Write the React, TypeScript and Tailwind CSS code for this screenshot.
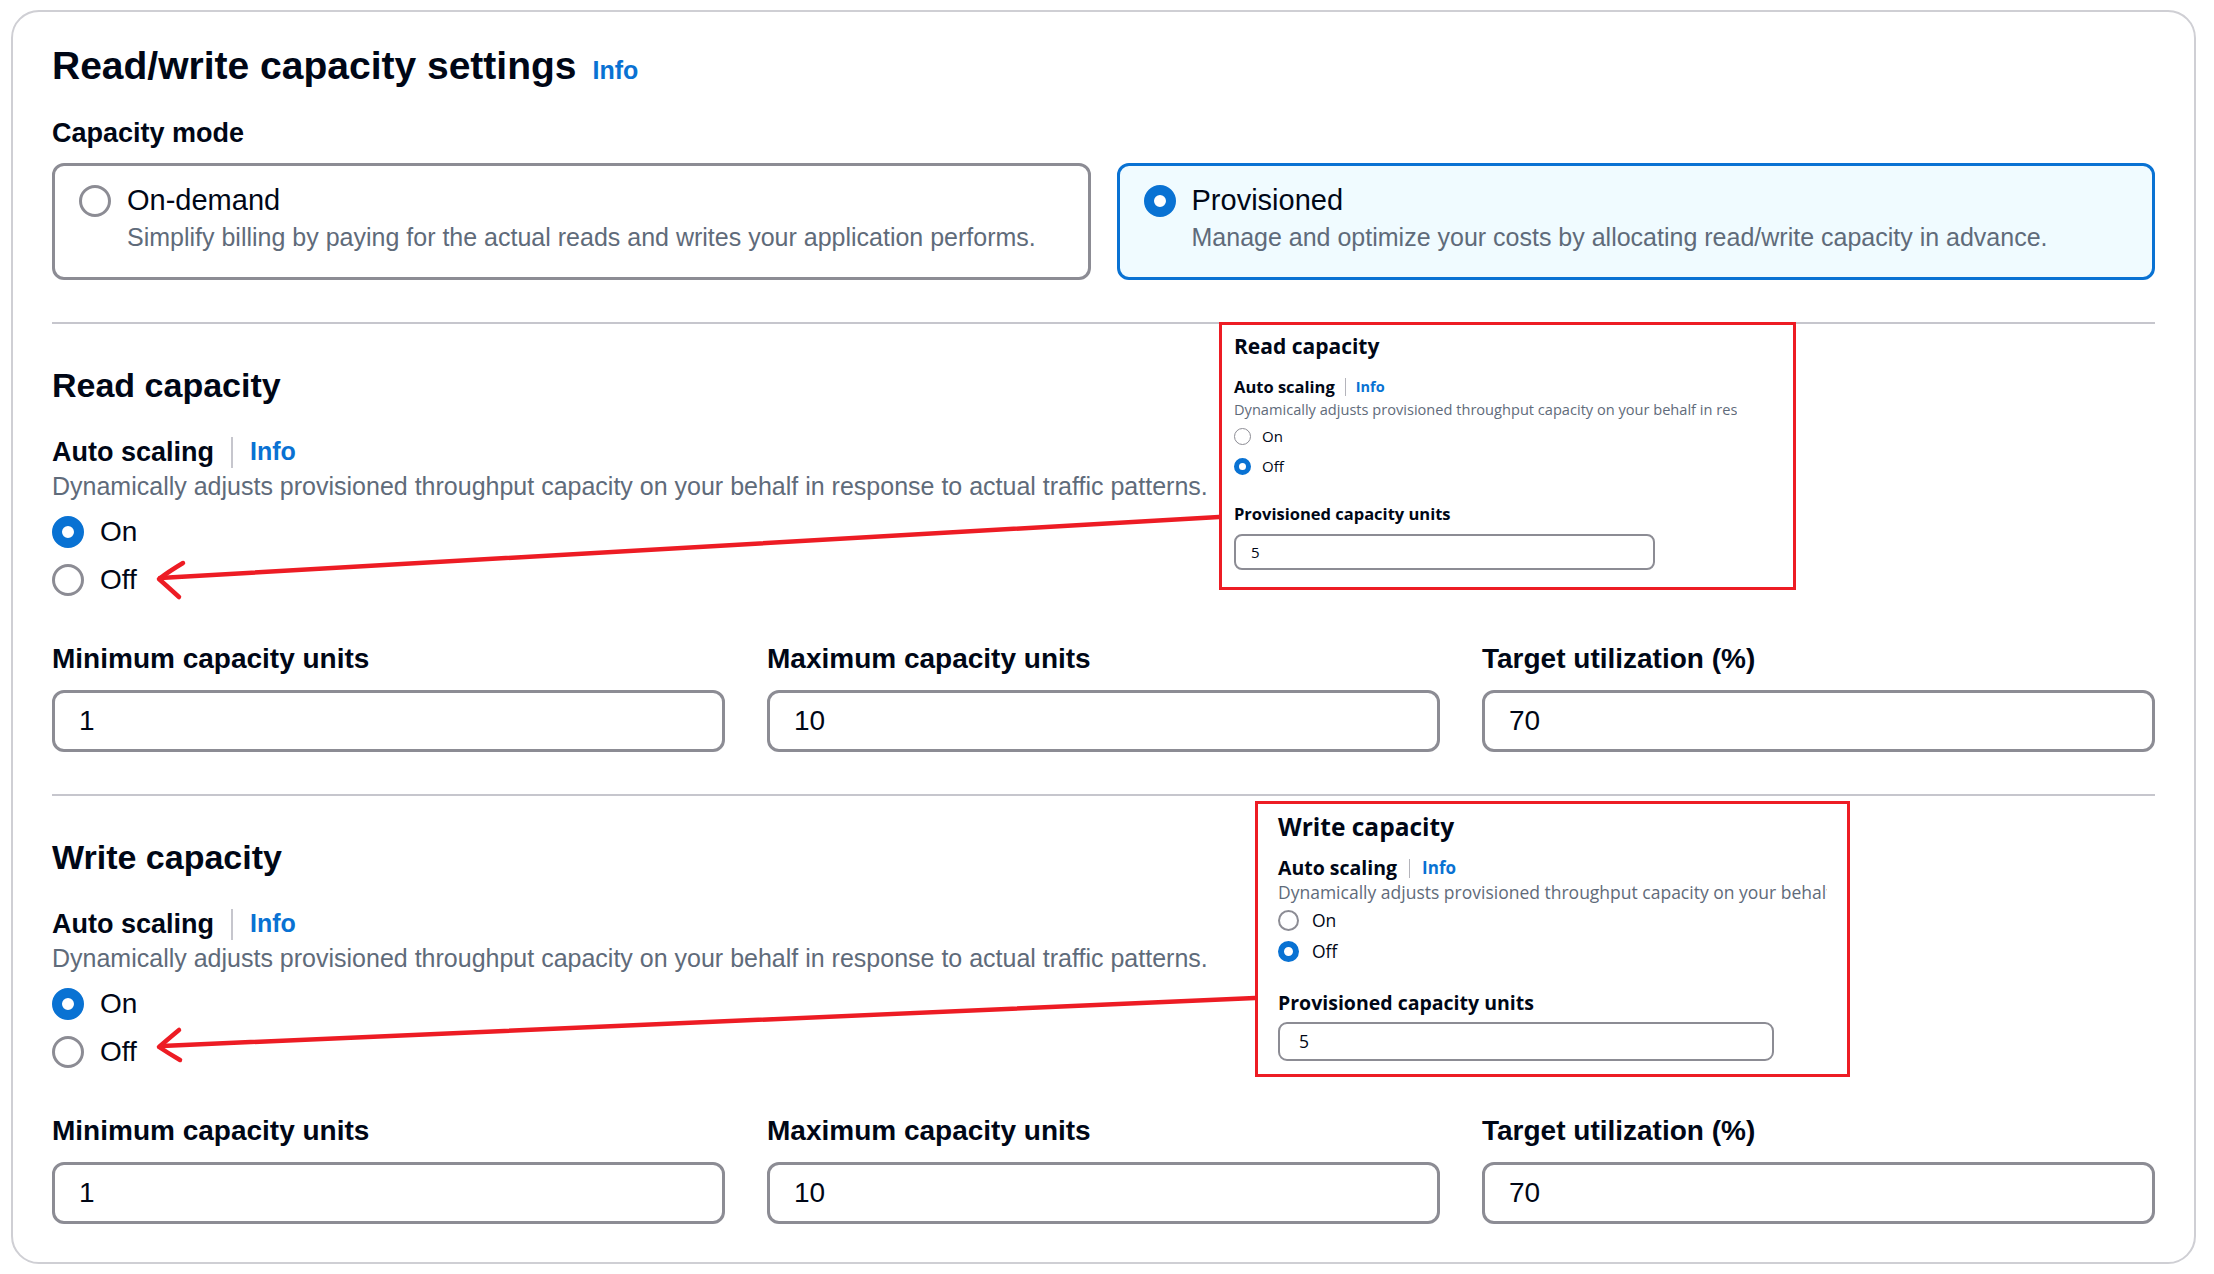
import React from 'react';

const MAIN = "font-['Liberation_Sans',Arial,sans-serif]";
const SHOT = "font-['Open_Sans','Noto_Sans',sans-serif]";

const DESC = 'Dynamically adjusts provisioned throughput capacity on your behalf in response to actual traffic patterns.';

const MainRadio: React.FC<{ checked?: boolean }> = ({ checked }) => (
  <span
    className={`block w-[32px] h-[32px] shrink-0 rounded-full bg-white ${
      checked ? 'border-[10px] border-[#0972d3]' : 'border-[3px] border-[#8c8c94]'
    }`}
  />
);

const ModeTile: React.FC<{ title: string; desc: string; selected?: boolean }> = ({ title, desc, selected }) => (
  <div
    className={`h-[117px] rounded-[12px] border-[3px] pl-[24px] pt-[16px] ${
      selected ? 'border-[#0972d3] bg-[#f0fbff]' : 'border-[#8c8c94] bg-white'
    }`}
  >
    <div className="flex items-center h-[38px] gap-[16px]">
      <MainRadio checked={selected} />
      <span className="text-[29px] text-[#000716]">{title}</span>
    </div>
    <p className="mt-[2px] pl-[48px] text-[25px] leading-[30px] text-[#5f6b7a]">{desc}</p>
  </div>
);

const fields = [
  { label: 'Minimum capacity units', value: '1' },
  { label: 'Maximum capacity units', value: '10' },
  { label: 'Target utilization (%)', value: '70' },
];

const CapacitySection: React.FC<{ title: string }> = ({ title }) => (
  <section>
    <h2 className="mt-[39px] h-[44px] flex items-center text-[34px] font-bold text-[#000716]">{title}</h2>
    <div className="mt-[27px] h-[36px] flex items-center">
      <span className="text-[27px] font-bold text-[#000716]">Auto scaling</span>
      <span className="mx-[17px] w-[2px] h-[31px] bg-[#c6c6cd]" />
      <a className="text-[25px] font-bold text-[#0972d3]">Info</a>
    </div>
    <p className="mt-[1px] h-[32px] flex items-center text-[25px] text-[#5f6b7a]">{DESC}</p>
    <div className="mt-[5px]">
      <div className="h-[48px] flex items-center gap-[16px]">
        <MainRadio checked />
        <span className="text-[28px] text-[#000716]">On</span>
      </div>
      <div className="h-[48px] flex items-center gap-[16px]">
        <MainRadio />
        <span className="text-[28px] text-[#000716]">Off</span>
      </div>
    </div>
    <div className="mt-[37px] grid grid-cols-3 gap-x-[42px]">
      {fields.map((f) => (
        <div key={f.label}>
          <div className="h-[36px] flex items-center text-[28px] font-bold text-[#000716]">{f.label}</div>
          <div className="mt-[13px] h-[62px] rounded-[12px] border-[3px] border-[#8c8c94] bg-white px-[24px] flex items-center text-[28px] text-[#000716]">
            {f.value}
          </div>
        </div>
      ))}
    </div>
  </section>
);

// screenshots pasted over the form, read one is a bit smaller than write one
const ReadShot: React.FC = () => (
  <div className={`absolute left-[1219px] top-[322px] w-[577px] h-[268px] border-[3px] border-[#ed1c24] bg-white pl-[12px] pt-[9px] ${SHOT}`}>
    <div className="h-[26px] flex items-center text-[21px] font-bold text-[#000716]">Read capacity</div>
    <div className="mt-[16px] h-[22px] flex items-center">
      <span className="text-[16.5px] font-bold text-[#000716]">Auto scaling</span>
      <span className="mx-[10px] w-[1px] h-[18px] bg-[#b4b4bb]" />
      <span className="text-[14.5px] font-bold text-[#0972d3]">Info</span>
    </div>
    <div className="mt-[1px] w-[503px] h-[20px] overflow-hidden whitespace-nowrap text-[14.6px] leading-[20px] text-[#5f6b7a]">
      {DESC}
    </div>
    <div className="mt-[2px]">
      <div className="h-[30px] flex items-center gap-[11px]">
        <span className="block w-[17px] h-[17px] rounded-full border-[1.5px] border-[#8c8c94]" />
        <span className="text-[15px] text-[#000716]">On</span>
      </div>
      <div className="h-[30px] flex items-center gap-[11px]">
        <span className="block w-[17px] h-[17px] rounded-full border-[5px] border-[#0972d3]" />
        <span className="text-[15px] text-[#000716]">Off</span>
      </div>
    </div>
    <div className="mt-[22px] h-[22px] flex items-center text-[16.5px] font-bold text-[#000716]">Provisioned capacity units</div>
    <div className="mt-[9px] w-[421px] h-[36px] rounded-[8px] border-2 border-[#8c8c94] pl-[15px] flex items-center text-[15px] text-[#000716]">
      5
    </div>
  </div>
);

const WriteShot: React.FC = () => (
  <div className={`absolute left-[1255px] top-[801px] w-[595px] h-[276px] border-[3px] border-[#ed1c24] bg-white pl-[20px] pt-[8px] ${SHOT}`}>
    <div className="h-[30px] flex items-center text-[24.5px] font-bold text-[#000716]">Write capacity</div>
    <div className="mt-[13px] h-[26px] flex items-center">
      <span className="text-[19.5px] font-bold text-[#000716]">Auto scaling</span>
      <span className="mx-[12px] w-[1px] h-[19px] bg-[#b4b4bb]" />
      <span className="text-[17px] font-bold text-[#0972d3]">Info</span>
    </div>
    <div className="w-[549px] h-[22px] overflow-hidden whitespace-nowrap text-[17.5px] leading-[22px] text-[#5f6b7a]">
      {DESC}
    </div>
    <div className="mt-[2px]">
      <div className="h-[31px] flex items-center gap-[13px]">
        <span className="block w-[21px] h-[21px] rounded-full border-2 border-[#8c8c94]" />
        <span className="text-[17.5px] text-[#000716]">On</span>
      </div>
      <div className="h-[31px] flex items-center gap-[13px]">
        <span className="block w-[21px] h-[21px] rounded-full border-[6px] border-[#0972d3]" />
        <span className="text-[17.5px] text-[#000716]">Off</span>
      </div>
    </div>
    <div className="mt-[23px] h-[26px] flex items-center text-[19.5px] font-bold text-[#000716]">Provisioned capacity units</div>
    <div className="mt-[6px] w-[496px] h-[39px] rounded-[9px] border-2 border-[#8c8c94] pl-[19px] flex items-center text-[17.5px] text-[#000716]">
      5
    </div>
  </div>
);

const Arrows: React.FC = () => (
  <svg className="absolute left-0 top-0 pointer-events-none" width={2214} height={1274} viewBox="0 0 2214 1274" fill="none">
    <g stroke="#ed1c24" strokeWidth={4.5} strokeLinecap="round" strokeLinejoin="round">
      <path d="M1219 517 L160 578" />
      <path d="M183 563 Q168 572 159 579 Q168 587 179 597" />
      <path d="M1255 998 L162 1046" />
      <path d="M179 1030 Q167 1040 159 1047 Q168 1053 180 1060" />
    </g>
  </svg>
);

export default function App() {
  return (
    <div className={`relative w-[2214px] h-[1274px] bg-white pt-[10px] ${MAIN}`}>
      <div className="ml-[11px] w-[2185px] h-[1254px] rounded-[28px] border-2 border-[#cfcfd4] px-[39px] pt-[32px]">
        <div className="h-[44px] flex items-baseline gap-[16px]">
          <h1 className="text-[39px] leading-[44px] font-bold text-[#000716]">Read/write capacity settings</h1>
          <a className="text-[25px] font-bold text-[#0972d3]">Info</a>
        </div>
        <div className="mt-[29px] h-[32px] flex items-center text-[27px] font-bold text-[#000716]">Capacity mode</div>
        <div className="mt-[14px] grid grid-cols-2 gap-[26px]">
          <ModeTile
            title="On-demand"
            desc="Simplify billing by paying for the actual reads and writes your application performs."
          />
          <ModeTile
            selected
            title="Provisioned"
            desc="Manage and optimize your costs by allocating read/write capacity in advance."
          />
        </div>
        <div className="mt-[42px] h-[2px] bg-[#c6c6cd]" />
        <CapacitySection title="Read capacity" />
        <div className="mt-[42px] h-[2px] bg-[#c6c6cd]" />
        <CapacitySection title="Write capacity" />
      </div>
      <Arrows />
      <ReadShot />
      <WriteShot />
    </div>
  );
}
